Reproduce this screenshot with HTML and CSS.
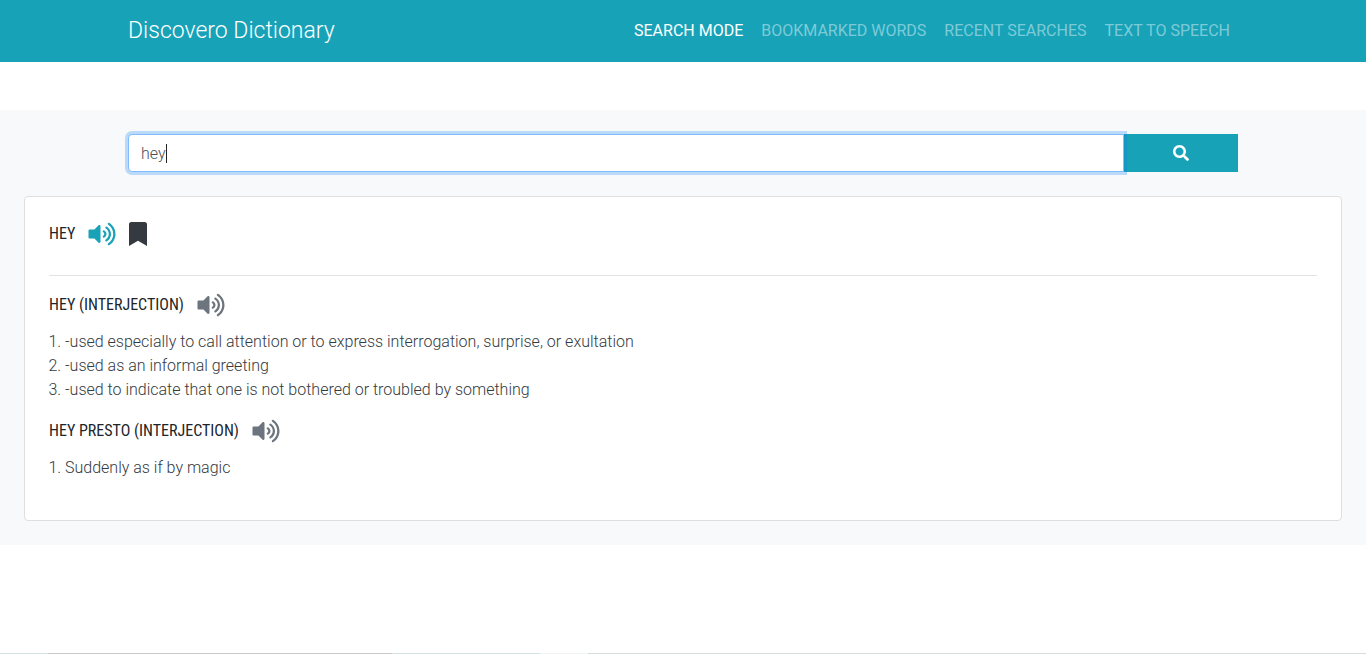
FILE: index.html
```html
<!DOCTYPE html>
<html lang="en">
<head>
<meta charset="utf-8">
<meta name="viewport" content="width=device-width, initial-scale=1">
<title>Discovero Dictionary</title>
<link rel="stylesheet" href="styles.css">
</head>
<body>
<svg class="sprite" aria-hidden="true">
  <symbol id="volume" viewBox="0 0 576 512"><path fill="currentColor" d="M215.03 71.05L126.06 160H24c-13.26 0-24 10.74-24 24v144c0 13.25 10.74 24 24 24h102.06l88.97 88.95c15.03 15.03 40.97 4.47 40.97-16.97V88.02c0-21.46-25.96-31.98-40.97-16.97zm233.32-51.08c-11.17-7.33-26.18-4.24-33.51 6.95-7.34 11.17-4.22 26.18 6.95 33.51 66.27 43.49 105.82 116.6 105.82 195.58 0 78.98-39.55 152.09-105.82 195.58-11.17 7.32-14.29 22.34-6.95 33.5 7.04 10.71 21.93 14.56 33.51 6.95C528.27 439.58 576 351.33 576 256S528.27 72.43 448.35 19.97zM480 256c0-63.53-32.06-121.94-85.77-156.24-11.19-7.14-26.03-3.82-33.12 7.46s-3.78 26.21 7.41 33.36C408.27 165.97 432 209.11 432 256s-23.73 90.02-63.48 115.42c-11.19 7.14-14.5 22.07-7.41 33.36 6.51 10.36 21.12 15.14 33.12 7.46C447.94 377.94 480 319.54 480 256zm-141.77-76.87c-11.58-6.33-26.19-2.16-32.61 9.45-6.39 11.61-2.16 26.2 9.45 32.61C327.98 228.28 336 241.63 336 256c0 14.38-8.02 27.72-20.92 34.81-11.61 6.41-15.84 21-9.45 32.61 6.43 11.66 21.05 15.8 32.61 9.45 28.23-15.55 45.77-45 45.77-76.88s-17.54-61.32-45.78-76.86z"/></symbol>
</svg>
<header class="navbar">
  <div class="container navbar-inner">
    <a class="brand" href="#">Discovero Dictionary</a>
    <nav class="nav" aria-label="Main">
      <a class="nav-link active" href="#" aria-current="page">SEARCH MODE</a>
      <a class="nav-link" href="#">BOOKMARKED WORDS</a>
      <a class="nav-link" href="#">RECENT SEARCHES</a>
      <a class="nav-link" href="#">TEXT TO SPEECH</a>
    </nav>
  </div>
</header>
<main class="panel">
  <div class="container">
    <form class="search">
      <div class="field">
        <input class="search-input" type="text" value="hey" aria-label="Search word">
        <span class="caret" aria-hidden="true"></span>
      </div>
      <button class="search-button" type="button" aria-label="Search">
        <svg class="search-icon" viewBox="0 0 512 512" aria-hidden="true"><path fill="currentColor" d="M505 442.7L405.3 343c-4.500-4.500-10.600-7-17-7H372c27.600-35.300 44-79.700 44-128C416 93.100 322.900 0 208 0S0 93.100 0 208s93.100 208 208 208c48.300 0 92.700-16.400 128-44v16.300c0 6.400 2.500 12.500 7 17l99.700 99.700c9.400 9.400 24.600 9.400 33.900 0l28.300-28.300c9.400-9.400 9.400-24.600.1-34zM208 336c-70.700 0-128-57.200-128-128 0-70.700 57.200-128 128-128 70.700 0 128 57.200 128 128 0 70.700-57.200 128-128 128z"/></svg>
      </button>
    </form>
  </div>
  <article class="card">
    <div class="word-row lead">
      <h1 class="word">HEY</h1>
      <button class="icon-button info" type="button" aria-label="Pronounce hey"><svg class="volume" aria-hidden="true"><use href="#volume"/></svg></button>
      <button class="icon-button dark" type="button" aria-label="Bookmark hey"><svg class="bookmark" viewBox="0 0 384 512" aria-hidden="true"><path fill="currentColor" d="M0 512V48C0 21.490 21.490 0 48 0h288c26.510 0 48 21.490 48 48v464L192 400 0 512z"/></svg></button>
    </div>
    <hr class="divider">
    <section>
      <div class="word-row">
        <h2 class="word">HEY (INTERJECTION)</h2>
        <button class="icon-button muted" type="button" aria-label="Pronounce hey"><svg class="volume" aria-hidden="true"><use href="#volume"/></svg></button>
      </div>
      <ol class="senses">
        <li>-used especially to call attention or to express interrogation, surprise, or exultation</li>
        <li>-used as an informal greeting</li>
        <li>-used to indicate that one is not bothered or troubled by something</li>
      </ol>
    </section>
    <section>
      <div class="word-row">
        <h2 class="word">HEY PRESTO (INTERJECTION)</h2>
        <button class="icon-button muted" type="button" aria-label="Pronounce hey presto"><svg class="volume" aria-hidden="true"><use href="#volume"/></svg></button>
      </div>
      <ol class="senses">
        <li>Suddenly as if by magic</li>
      </ol>
    </section>
  </article>
</main>
<footer class="footer"></footer>
</body>
</html>
```
FILE: styles.css
```css
* { box-sizing: border-box; }
body {
  margin: 0;
  min-height: 100vh;
  display: flex;
  flex-direction: column;
  background: #fff;
  color: #343a40;
  font: 300 16px/24px Roboto, "Liberation Sans", sans-serif;
}
.sprite { display: none; }
.container { width: 100%; max-width: 1140px; margin: 0 auto; padding: 0 15px; }
.navbar { background: #17a2b8; padding: 8px 0; }
.navbar-inner { display: flex; align-items: center; justify-content: space-between; min-height: 46px; }
.brand { color: #fff; text-decoration: none; font-size: 23px; line-height: 32px; }
.nav { display: flex; gap: 2px; }
.nav-link { padding: 8px; color: rgba(255, 255, 255, .45); text-decoration: none; font-size: 16px; font-weight: 400; }
.nav-link.active { color: #fff; }
.panel { margin-top: 48px; padding: 24px; background: #f8f9fa; }
.search { display: flex; margin-bottom: 24px; }
.field { position: relative; flex: 1; }
.search-input {
  display: block;
  width: 100%;
  height: 38px;
  padding: 6px 12px;
  border: 1px solid #80bdff;
  border-radius: 4px 0 0 4px;
  outline: 0;
  box-shadow: 0 0 0 3px #bbd9f8;
  background: #fff;
  color: #495057;
  font: inherit;
}
.caret { position: absolute; left: 38px; top: 10px; width: 1px; height: 19px; background: #212529; }
.search-button {
  position: relative;
  width: 114px;
  border: 0;
  padding: 0;
  background: #17a2b8;
  box-shadow: inset 3px 0 #1497c4;
  color: #fff;
}
.search-icon { display: block; width: 16px; height: 16px; margin: 0 auto; }
.card { padding: 24px; border: 1px solid #dfdfdf; border-radius: 4px; background: #fff; }
.word-row { display: flex; align-items: center; gap: 13px; height: 28px; margin-bottom: 11px; }
.lead { height: 26px; }
.word { margin: 0; color: #212529; font: 400 16px/28px "Roboto Condensed", "Liberation Sans Narrow", sans-serif; }
.icon-button { display: block; border: 0; padding: 0; background: none; }
.info { color: #17a2b8; }
.dark { color: #343a40; }
.muted { color: #6c757d; }
.volume { display: block; width: 28px; height: 24px; }
.bookmark { display: block; width: 18px; height: 24px; }
.divider { margin: 28px 0 15px; border: 0; border-top: 1px solid #e3e3e3; }
.senses { margin: 0 0 15px; padding-left: 16px; }
.senses:last-child { margin-bottom: 15px; }
.card section:last-child { padding-bottom: 1px; }
.footer { margin-top: auto; height: 1px; background: linear-gradient(90deg, #d5e2e4 48px, #c9c7c9 48px 392px, #d5e2e4 392px 540px, #f0f3f3 540px 588px, #d5dcde 588px); }
```
